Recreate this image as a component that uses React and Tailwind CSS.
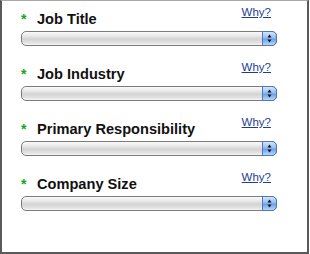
import React from "react";

function Select() {
  return (
    <div className="relative h-[15px] w-[256px] rounded-[5px] border border-[#7c7c7c] bg-[linear-gradient(#fafafa_0%,#e9e9e9_30%,#d3d3d3_55%,#e4e4e4_85%,#f6f6f6_100%)]">
      <div className="absolute right-[-1px] top-[-1px] flex h-[15px] w-[15px] flex-col items-center justify-center rounded-r-[5px] border border-[#4f78b8] bg-[linear-gradient(#d4e6fc_0%,#92bdf0_45%,#6b9fe6_55%,#b8d8fb_100%)]">
        <svg width="5" height="9" viewBox="0 0 5 9">
          <path d="M2.5 0.5 L4.5 3.5 L0.5 3.5 Z" fill="#111" />
          <path d="M2.5 8.5 L4.5 5.5 L0.5 5.5 Z" fill="#111" />
        </svg>
      </div>
    </div>
  );
}

function Field({ label }) {
  return (
    <div className="flex h-[55px] flex-col">
      <div className="flex justify-end pr-[36px] pt-[5px]">
        <a href="#" className="text-[11.5px] leading-[12px] text-[#1c3d96] underline">Why?</a>
      </div>
      <div className="mt-[-7px] flex items-center pl-[19px]">
        <span className="w-[16px] text-[14px] font-bold leading-[16px] text-[#1aa61a]">*</span>
        <span className="text-[14.6px] font-bold leading-[16px] text-[#111]">{label}</span>
      </div>
      <div className="pl-[19px] pt-[4px]">
        <Select />
      </div>
    </div>
  );
}

export default function App() {
  return (
    <div className="h-[254px] w-[310px] bg-white" style={{ fontFamily: '"Liberation Sans", Arial, sans-serif' }}>
      <div className="h-[254px] w-[309px] border-x-2 border-b-2 border-t border-x-[#5a5a5a] border-b-[#5a5a5a] border-t-[#a8a8a8] bg-white">
        <Field label="Job Title" />
        <Field label="Job Industry" />
        <Field label="Primary Responsibility" />
        <Field label="Company Size" />
      </div>
    </div>
  );
}
